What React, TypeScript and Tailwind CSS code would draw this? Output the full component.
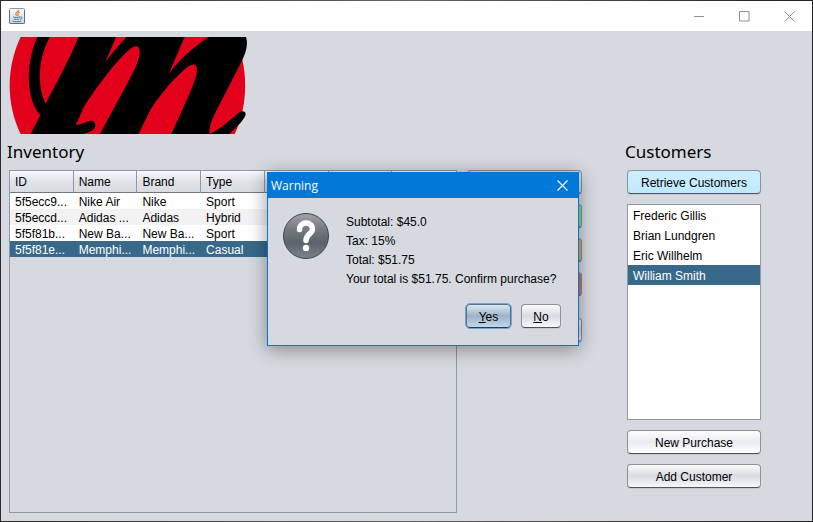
import React from "react";

const columnCount = 7;
const columns = ["ID", "Name", "Brand", "Type"];

const items = [
  { cells: ["5f5ecc9...", "Nike Air", "Nike", "Sport"], tone: "bg-white" },
  { cells: ["5f5eccd...", "Adidas ...", "Adidas", "Hybrid"], tone: "bg-[#f2f2f2]" },
  { cells: ["5f5f81b...", "New Ba...", "New Ba...", "Sport"], tone: "bg-white" },
  { cells: ["5f5f81e...", "Memphi...", "Memphi...", "Casual"], tone: "bg-[#39698a] text-white" },
];

const slots = Array.from({ length: columnCount }, (_, i) => i);

const customers = ["Frederic Gillis", "Brian Lundgren", "Eric Willhelm", "William Smith"];
const selectedCustomer = "William Smith";

const buttonBase =
  "block h-6 rounded border text-center text-[12px] leading-6 shadow-[0_1px_0_#c3c6cd]";
const grayEdge = "border-[#8d9097] border-b-[#505359]";
const plainFill = "bg-linear-to-b from-[#fafafc] via-[#d9dbe1] to-[#f6f8fc]";
const brightFill = "bg-linear-to-b from-[#fdfdfe] via-[#e8ebf1] to-white";

function JavaIcon() {
  return (
    <svg width="16" height="16" viewBox="0 0 16 16" fill="none" aria-hidden="true">
      <defs>
        <linearGradient id="cup" x1="0" y1="0" x2="0" y2="1">
          <stop offset="0" stopColor="#fbfcfd" />
          <stop offset="1" stopColor="#c8d7e1" />
        </linearGradient>
      </defs>
      <rect x=".5" y=".5" width="15" height="15" rx="1" fill="url(#cup)" stroke="#8297a7" />
      <path d="M.5 2v12.500q0 1 1 1h13q1 0 1-1V2" stroke="#507593" />
      <path d="M9.800 1.800C9.500 3.800 6.300 4.300 6.700 6c.2.800.8 1 1 1.900M10.800 4.300C8.700 4.900 8.200 5.700 9 6.600c.5.600.1 1.100-.4 1.500" stroke="#e87922" strokeWidth="1.100" />
      <path d="M4 9c2 .6 5.200.6 7.200 0M4.800 11c1.500.5 4.200.5 5.500 0M11.200 9c2.600-.5 2.100 2-.2 2.500M3.500 13.200c2.400.7 6.200.7 8.600 0" stroke="#4d7891" />
    </svg>
  );
}

function Logo() {
  return (
    <svg className="ml-2 block" width="239" height="97" viewBox="27 111 717 291" role="img" aria-label="Company logo">
      <path d="M62 111C18 202 18 312 62 402H704C746 312 746 202 704 111Z" fill="#e2001a" />
      <path d="M112 111C78 188 75 292 121 346L92 402H247C267 399 286 391 286 376C285 361 272 360 260 366C248 371 239 375 227 375C236 357 244 338 250 323C291 258 345 188 386 151C402 134 419 134 419 153C420 179 401 214 388 239L300 402H416L451 329C485 279 520 237 555 207C575 188 592 189 591 210C590 233 573 270 560 301L514 402H629C626 391 630 372 641 348L725 184C736 162 746 134 738 111H626C579 142 537 180 506 222L554 111H380C355 137 334 161 316 187L348 111H236C207 180 172 246 136 311C107 248 119 163 150 111Z" fill="#000" />
      <path d="M629 402C658 391 691 359 718 337C727 331 738 333 737 344C729 365 703 388 687 402Z" fill="#000" />
    </svg>
  );
}

function QuestionIcon() {
  return (
    <svg className="block shrink-0" width="46" height="46" viewBox="0 0 46 46" aria-hidden="true">
      <defs>
        <linearGradient id="disc" x1="0" y1="0" x2="0" y2="1">
          <stop offset="0" stopColor="#a0a3a8" />
          <stop offset=".35" stopColor="#757a80" />
          <stop offset=".65" stopColor="#5b626a" />
          <stop offset="1" stopColor="#7a838d" />
        </linearGradient>
      </defs>
      <circle cx="23" cy="23" r="22.500" fill="url(#disc)" stroke="#3f454d" />
      <path d="M16.500 16.500C16.500 8 29.500 8 29.500 16C29.500 21 23 21 23 27.500" fill="none" stroke="#fff" strokeWidth="5.500" strokeLinecap="round" strokeLinejoin="round" />
      <circle cx="23" cy="35" r="3.200" fill="#fff" />
    </svg>
  );
}

function TitleBar() {
  return (
    <header className="flex h-[30px] shrink-0 items-center bg-white pl-2">
      <JavaIcon />
      <div className="ml-auto flex h-full">
        <button aria-label="Minimize" className="flex w-[46px] items-center justify-center">
          <svg width="11" height="11" viewBox="0 0 11 11" stroke="#8f8f8f"><path d="M0 5.500H10" /></svg>
        </button>
        <button aria-label="Maximize" className="flex w-[44px] items-center justify-center">
          <svg width="11" height="11" viewBox="0 0 11 11" fill="none" stroke="#8f8f8f"><path d="M.5.5h9.500v9.500h-9.500z" /></svg>
        </button>
        <button aria-label="Close" className="flex w-[46px] items-center justify-center">
          <svg width="11" height="11" viewBox="0 0 11 11" stroke="#8f8f8f"><path d="M.5.5l10 10M10.500.5l-10 10" /></svg>
        </button>
      </div>
    </header>
  );
}

function InventoryTable() {
  return (
    <div className="flex-1 border border-[#9297a1]">
      <table className="w-full table-fixed border-separate border-spacing-0 text-left">
        <thead>
          <tr className="bg-linear-to-b from-[#f8f9fb] via-[#dfe2e8] to-[#d8dbe2]">
            {slots.map((i) => (
              <th key={i} scope="col" className="h-[22px] border-r border-b border-r-[#9297a1] border-b-[#73777f] p-0 pl-[5px] font-normal last:border-r-0">
                {columns[i]}
              </th>
            ))}
          </tr>
        </thead>
        <tbody>
          {items.map((item) => (
            <tr key={item.cells[0]} className={item.tone}>
              {slots.map((i) => (
                <td key={i} className="h-4 p-0 pt-0.5 pl-[5px] leading-[14px] whitespace-nowrap">{item.cells[i]}</td>
              ))}
            </tr>
          ))}
        </tbody>
      </table>
    </div>
  );
}

function ConfirmDialog() {
  return (
    <div
      role="dialog"
      aria-labelledby="dialog-title"
      className="absolute top-[172px] left-[267px] w-[312px] border border-[#0078d7] bg-[#d6d9df] shadow-[0_3px_18px_rgba(0,0,0,0.4)]"
    >
      <div className="flex h-[25px] items-center justify-between bg-[#0078d7] pr-[10px] pl-[3px] text-white">
        <h2 id="dialog-title" className="font-['Open_Sans',sans-serif] text-[12px]">Warning</h2>
        <button aria-label="Close dialog">
          <svg width="11" height="11" viewBox="0 0 11 11" stroke="#fff" strokeWidth="1.200"><path d="M.5.5l10 10M10.500.5l-10 10" /></svg>
        </button>
      </div>
      <div className="flex gap-[17px] px-[15px] pt-[15px]">
        <QuestionIcon />
        <div className="leading-[19px] whitespace-nowrap">
          <p>Subtotal: $45.0</p>
          <p>Tax: 15%</p>
          <p>Total: $51.75</p>
          <p>Your total is $51.75. Confirm purchase?</p>
        </div>
      </div>
      <div className="flex justify-end gap-[10px] pt-[15px] pr-[17px] pb-[17px]">
        <button className={buttonBase + " w-[45px] border-[#4f7392] border-b-[#1f3f59] bg-linear-to-b from-[#dde7f0] via-[#9db3c8] to-[#c3d7e8] outline-1 outline-[#73a4d1]"}>
          <u>Y</u>es
        </button>
        <button className={buttonBase + " w-10 " + grayEdge + " " + plainFill}>
          <u>N</u>o
        </button>
      </div>
    </div>
  );
}

export default function App() {
  return (
    <div className="relative flex min-h-screen flex-col bg-linear-to-r from-[#2b2b2b] via-[#6b6262] to-[#202124] p-px font-['Liberation_Sans',Arial,sans-serif] text-[12px] text-black">
      <TitleBar />
      <main className="flex flex-1 flex-col bg-[#d6d9df] pt-[6px]">
        <Logo />
        <div className="flex flex-1 pr-[51px] pb-2 pl-2">
          <section className="flex flex-1 flex-col">
            <h1 className="-ml-0.5 h-9 font-['Noto_Sans',sans-serif] text-[17px] leading-9">Inventory</h1>
            <InventoryTable />
          </section>
          <div className="ml-[10px] flex w-[115px] flex-col gap-[10px] pt-9">
            <button aria-label="Retrieve inventory" className={buttonBase + " " + grayEdge + " bg-[#b9e6fa]"} />
            <button aria-label="Add item" className={buttonBase + " " + grayEdge + " bg-[#8fdc8f]"} />
            <button aria-label="Edit item" className={buttonBase + " " + grayEdge + " bg-[#e8a558]"} />
            <button aria-label="Delete item" className={buttonBase + " " + grayEdge + " bg-[#ed6464]"} />
            <button aria-label="Clear selection" className={buttonBase + " mt-3 " + grayEdge + " " + plainFill} />
          </div>
          <section className="ml-[45px] flex w-[134px] flex-col">
            <h1 className="-ml-0.5 h-9 font-['Noto_Sans',sans-serif] text-[17px] leading-9">Customers</h1>
            <button className={buttonBase + " " + grayEdge + " bg-linear-to-b from-[#cdefff] to-[#bfe9fe]"}>Retrieve Customers</button>
            <ul role="listbox" aria-label="Customers" className="mt-[10px] h-[216px] border border-[#9297a1] bg-white">
              {customers.map((name) => (
                <li
                  key={name}
                  role="option"
                  aria-selected={name === selectedCustomer}
                  className="h-5 pt-0.5 pl-[5px] leading-[18px] aria-selected:bg-[#39698a] aria-selected:text-white"
                >
                  {name}
                </li>
              ))}
            </ul>
            <button className={buttonBase + " mt-[10px] " + grayEdge + " " + brightFill}>New Purchase</button>
            <button className={buttonBase + " mt-[10px] " + grayEdge + " " + plainFill}>Add Customer</button>
          </section>
        </div>
      </main>
      <ConfirmDialog />
    </div>
  );
}
